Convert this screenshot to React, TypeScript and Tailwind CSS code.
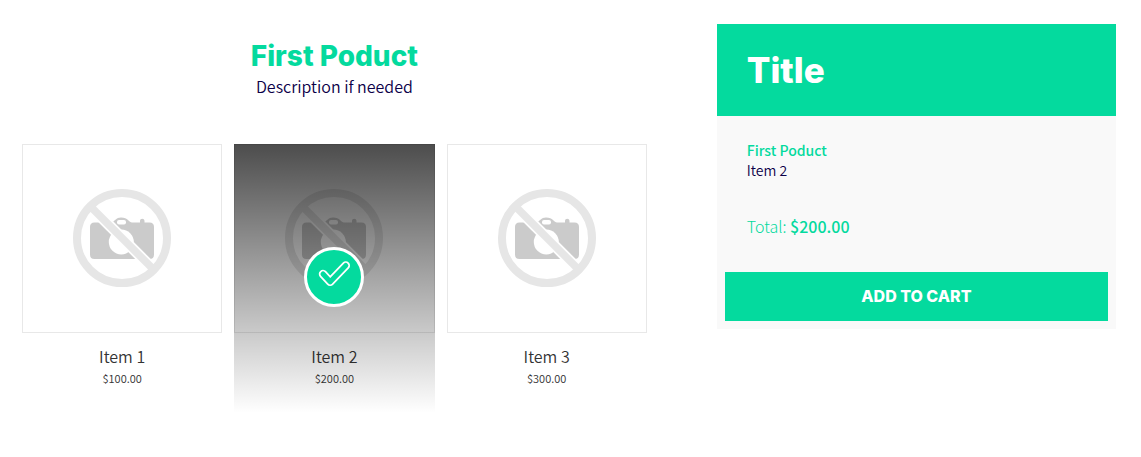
import { useState } from "react";

const items = [
  { name: "Item 1", price: 100 },
  { name: "Item 2", price: 200 },
  { name: "Item 3", price: 300 },
];

const money = (value: number) => `$${value.toFixed(2)}`;

function NoPhoto() {
  return (
    <svg viewBox="-50 -49 100 100" className="size-[100px]" aria-hidden="true">
      <path
        d="M-27.5 -15.500H-10C-7 -17 -6 -20.500 -1 -20.500C6 -20.500 7 -15.500 10 -15.500H18V-17C18 -20 22.500 -20 22.500 -17V-15.500H27.500Q32 -15.500 32 -11V16.500Q32 21 27.500 21H-27.500Q-32 21 -32 16.500V-11Q-32 -15.500 -27.500 -15.500Z"
        fill="#cbcbcb"
      />
      <rect x="-5" y="-18" width="9" height="4.600" rx="2" fill="#fff" />
      <circle cx="-0.700" cy="4" r="12.500" fill="#fff" />
      <path d="M-30 -30L30 30" stroke="#fff" strokeWidth="11" />
      <path d="M-31 -31L31 31" stroke="#e6e6e6" strokeWidth="7.500" />
      <circle r="45" fill="none" stroke="#e6e6e6" strokeWidth="8" />
    </svg>
  );
}

function SelectedBadge() {
  return (
    <span className="absolute top-[103px] left-1/2 size-[60px] -translate-x-1/2 rounded-full border-3 border-white bg-[#04da9e]">
      <svg viewBox="3 3 54 54" className="size-full" fill="none" strokeLinecap="round" strokeLinejoin="round" aria-hidden="true">
        <path d="M19 27L26.200 34.800L41.800 18.500" stroke="#fff" strokeWidth="8.500" />
        <path d="M19 27L26.200 34.800L41.800 18.500" stroke="#04da9e" strokeWidth="5" />
      </svg>
    </span>
  );
}

export default function App() {
  const [selected, setSelected] = useState(1);
  const current = items[selected];

  return (
    <main className="grid grid-cols-[1.595fr_1fr] items-start gap-16 bg-white pt-6 pr-[25px] pl-4 font-['Noto_Sans_CJK_JP','Noto_Sans',sans-serif]">
      <section className="pt-3">
        <h1 className="text-center font-['Inter',sans-serif] text-[28px] leading-10 font-extrabold text-[#04da9e]">First Poduct</h1>
        <p className="text-center text-base leading-5 font-[350] text-[#0c0048]">Description if needed</p>
        <div role="radiogroup" aria-label="First Poduct" className="mt-12 grid grid-cols-3">
          {items.map((item, index) => (
            <label key={item.name} className="relative mx-1.5 block cursor-pointer pb-6 text-center text-[#333]">
              <input
                type="radio"
                name="product"
                className="sr-only"
                checked={index === selected}
                onChange={() => setSelected(index)}
              />
              <span className="flex h-[189px] items-center justify-center border border-[#e8e8e8]">
                <NoPhoto />
              </span>
              <span className="mt-3 block text-base leading-[22px] font-[350]">{item.name}</span>
              <span className="block text-[11px] leading-[22px] font-[350]">{money(item.price)}</span>
              {index === selected && (
                <>
                  <span className="absolute inset-0 bg-linear-to-b from-black/70 to-transparent" />
                  <SelectedBadge />
                </>
              )}
            </label>
          ))}
        </div>
      </section>

      <aside className="bg-[#f9f9f9]">
        <h2 className="bg-[#04da9e] px-[30px] py-6 font-['Inter',sans-serif] text-[35px] leading-11 font-extrabold text-white">Title</h2>
        <div className="px-[30px] pt-6">
          <h3 className="text-sm leading-5 font-medium text-[#04da9e]">First Poduct</h3>
          <p className="text-sm leading-5 font-[350] text-[#0c0048]">{current.name}</p>
          <p className="mt-9 text-base leading-5 font-light text-[#04da9e]">
            Total: <strong className="font-medium">{money(current.price)}</strong>
          </p>
        </div>
        <div className="px-2 pt-9 pb-2">
          <button
            type="button"
            className="block w-full cursor-pointer bg-[#04da9e] py-3 font-['Inter',sans-serif] text-base leading-[25px] font-extrabold text-white"
          >
            ADD TO CART
          </button>
        </div>
      </aside>
    </main>
  );
}
